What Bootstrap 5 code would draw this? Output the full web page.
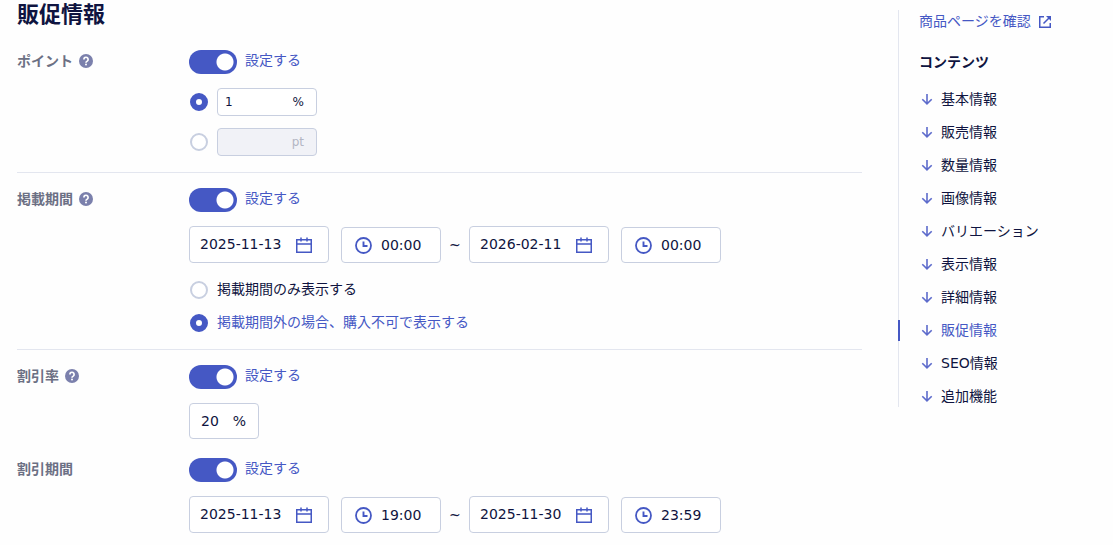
<!DOCTYPE html>
<html lang="ja">
<head>
<meta charset="utf-8">
<meta name="viewport" content="width=device-width, initial-scale=1">
<title>販促情報</title>
<link href="https://cdn.jsdelivr.net/npm/bootstrap@5.3.0/dist/css/bootstrap.min.css" rel="stylesheet">
<style>
:root { --ink: #0f1440; --accent: #4558c4; --line: #e3e6ef; --field: #c8cfe0; --muted: #6c7084; }
body { background: #fefefe; color: var(--ink); font: 14px/21px "DejaVu Sans", "Noto Sans CJK JP", sans-serif; }
a { text-decoration: none; }
.page { gap: 36px; padding-left: 17px; }
.page-title { font-size: 22px; line-height: 30px; margin: 0 0 20px; font-weight: 700; }
.setting { column-gap: 12px; }
.setting + .setting { margin-top: 19px; }
.setting-name { width: 160px; height: 22px; color: var(--muted); font-weight: 700; gap: 6px; }
.setting-body { gap: 14px; min-width: 0; }
.block { padding-bottom: 16px; margin-bottom: 15px; border-bottom: 1px solid var(--line); }
.accent { color: var(--accent); }
.switch-row { height: 24px; }
.switch-row label { height: 22px; }
.form-check-input.toggle { appearance: none; width: 48px; height: 24px; border: 0; border-radius: 12px; background: #c8cee0 radial-gradient(circle at 12px 12px, #fff 8px, transparent 9px); }
.form-check-input.toggle:checked { background: var(--accent) radial-gradient(circle at 36px 12px, #fff 8px, transparent 9px); }
.form-check-input.pick { width: 18px; height: 18px; border: 2px solid var(--field); background: #fff; }
.form-check-input.pick:checked { border: 6px solid var(--accent); background: #fff; }
.pick-list { gap: 12px; }
.pick-text { padding-top: 2px; }
.pick-row { gap: 9px; padding-left: 1px; }
.field { border: 1px solid var(--field); border-radius: 4px; background: #fff; height: 36px; }
.field input { border: 0; outline: 0; padding: 0; background: transparent; color: inherit; flex: 1 1 0; min-width: 0; }
.field button { border: 0; padding: 0; background: transparent; display: flex; }
.field-date { width: 140px; height: 37px; padding: 0 16px 0 10px; }
.field-time { width: 100px; padding: 0 8px 0 13px; gap: 9px; }
.field-small { width: 100px; height: 28px; padding: 0 12px 0 7px; font-size: 12px; }
.field-rate { width: 70px; padding: 0 12px 0 11px; }
.field-off { background: #f1f2f7; color: #b3b6c4; }
.period { gap: 12px; }
.until { width: 12px; margin: 0 -4px; height: 36px; line-height: 36px; }
.side { width: 215px; margin-top: 10px; padding: 1px 0 0 20px; border-left: 1px solid var(--line); }
.side-title { font-size: 14px; line-height: 21px; font-weight: 700; margin: 20px 0 16px; }
.side-list { gap: 12px; }
.side-list a { color: var(--ink); gap: 6px; }
.side-list a.active { color: var(--accent); margin-left: -21px; padding-left: 19px; border-left: 2px solid var(--accent); }
</style>
</head>
<body>
<svg class="d-none">
  <symbol id="help" viewBox="0 0 14 14"><circle cx="7" cy="7" r="7" fill="#7b80ac"/><path d="M4.900 5.400a2.100 2.100 0 1 1 3.300 1.700c-.8.500-1.200.8-1.200 1.600" fill="none" stroke="#fff" stroke-width="1.700"/><circle cx="7" cy="10.600" r="1" fill="#fff"/></symbol>
  <symbol id="calendar" viewBox="0 0 16 16"><path d="M.75 2.750h14.500v12.500H.75zM.75 7h14.500M5 .5v4M11 .5v4" fill="none" stroke="#4558c4" stroke-width="1.500"/></symbol>
  <symbol id="clock" viewBox="0 0 17 17"><circle cx="8.500" cy="8.500" r="7.500" fill="none" stroke="#4558c4" stroke-width="1.800"/><path d="M8.500 4.500v4.500h4" fill="none" stroke="#4558c4" stroke-width="1.900"/></symbol>
  <symbol id="down" viewBox="0 0 16 16"><path d="M8 2v9.500M3.300 7.200 8 11.800l4.700-4.600" fill="none" stroke="#5d6bcb" stroke-width="1.600"/></symbol>
  <symbol id="external" viewBox="0 0 14 14"><path d="M5 1.750H.75v10.500h10.500V8M4.500 8.500l6-6" fill="none" stroke="#4558c4" stroke-width="1.500"/><path d="M7 1h5v5z" fill="#4558c4"/></symbol>
</svg>
<div class="page d-flex align-items-start">
  <main class="flex-grow-1">
    <h1 class="page-title">販促情報</h1>

    <section class="block">
      <div class="setting d-flex">
        <div class="setting-name d-flex align-items-center">ポイント<svg width="14" height="14"><use href="#help"/></svg></div>
        <div class="setting-body d-flex flex-column">
          <div class="switch-row d-flex gap-2"><input class="form-check-input toggle m-0" type="checkbox" role="switch" id="t1" checked><label class="accent" for="t1">設定する</label></div>
          <div class="pick-list d-flex flex-column">
            <div class="pick-row d-flex align-items-center"><input class="form-check-input pick m-0" type="radio" name="point" aria-label="%" checked><div class="field field-small d-flex align-items-center"><input type="text" id="p1" value="1"><label for="p1">%</label></div></div>
            <div class="pick-row d-flex align-items-center"><input class="form-check-input pick m-0" type="radio" name="point" aria-label="pt"><div class="field field-small field-off d-flex align-items-center"><input type="text" id="p2" disabled><label for="p2">pt</label></div></div>
          </div>
        </div>
      </div>
    </section>

    <section class="block">
      <div class="setting d-flex">
        <div class="setting-name d-flex align-items-center">掲載期間<svg width="14" height="14"><use href="#help"/></svg></div>
        <div class="setting-body d-flex flex-column">
          <div class="switch-row d-flex gap-2"><input class="form-check-input toggle m-0" type="checkbox" role="switch" id="t2" checked><label class="accent" for="t2">設定する</label></div>
          <div class="period d-flex align-items-end">
            <div class="field field-date d-flex align-items-center"><input type="text" value="2025-11-13" aria-label="開始日"><button type="button" aria-label="開始日を選択"><svg width="16" height="16"><use href="#calendar"/></svg></button></div>
            <div class="field field-time d-flex align-items-center"><svg width="17" height="17"><use href="#clock"/></svg><input type="text" value="00:00" aria-label="開始時刻"></div>
            <span class="until">~</span>
            <div class="field field-date d-flex align-items-center"><input type="text" value="2026-02-11" aria-label="終了日"><button type="button" aria-label="終了日を選択"><svg width="16" height="16"><use href="#calendar"/></svg></button></div>
            <div class="field field-time d-flex align-items-center"><svg width="17" height="17"><use href="#clock"/></svg><input type="text" value="00:00" aria-label="終了時刻"></div>
          </div>
          <div class="pick-list pick-text d-flex flex-column">
            <div class="pick-row d-flex align-items-center"><input class="form-check-input pick m-0" type="radio" name="show" id="s1"><label for="s1">掲載期間のみ表示する</label></div>
            <div class="pick-row d-flex align-items-center"><input class="form-check-input pick m-0" type="radio" name="show" id="s2" checked><label class="accent" for="s2">掲載期間外の場合、購入不可で表示する</label></div>
          </div>
        </div>
      </div>
    </section>

    <section>
      <div class="setting d-flex">
        <div class="setting-name d-flex align-items-center">割引率<svg width="14" height="14"><use href="#help"/></svg></div>
        <div class="setting-body d-flex flex-column">
          <div class="switch-row d-flex gap-2"><input class="form-check-input toggle m-0" type="checkbox" role="switch" id="t3" checked><label class="accent" for="t3">設定する</label></div>
          <div class="field field-rate d-flex align-items-center"><input type="text" id="rate" value="20"><label for="rate">%</label></div>
        </div>
      </div>
      <div class="setting d-flex">
        <div class="setting-name d-flex align-items-center">割引期間</div>
        <div class="setting-body d-flex flex-column">
          <div class="switch-row d-flex gap-2"><input class="form-check-input toggle m-0" type="checkbox" role="switch" id="t4" checked><label class="accent" for="t4">設定する</label></div>
          <div class="period d-flex align-items-end">
            <div class="field field-date d-flex align-items-center"><input type="text" value="2025-11-13" aria-label="割引開始日"><button type="button" aria-label="割引開始日を選択"><svg width="16" height="16"><use href="#calendar"/></svg></button></div>
            <div class="field field-time d-flex align-items-center"><svg width="17" height="17"><use href="#clock"/></svg><input type="text" value="19:00" aria-label="割引開始時刻"></div>
            <span class="until">~</span>
            <div class="field field-date d-flex align-items-center"><input type="text" value="2025-11-30" aria-label="割引終了日"><button type="button" aria-label="割引終了日を選択"><svg width="16" height="16"><use href="#calendar"/></svg></button></div>
            <div class="field field-time d-flex align-items-center"><svg width="17" height="17"><use href="#clock"/></svg><input type="text" value="23:59" aria-label="割引終了時刻"></div>
          </div>
        </div>
      </div>
    </section>
  </main>

  <aside class="side flex-shrink-0">
    <a class="accent d-flex align-items-center gap-2" href="#">商品ページを確認<svg width="14" height="14"><use href="#external"/></svg></a>
    <h2 class="side-title">コンテンツ</h2>
    <nav class="side-list d-flex flex-column" aria-label="コンテンツ">
      <a class="d-flex align-items-center" href="#"><svg width="16" height="16"><use href="#down"/></svg>基本情報</a>
      <a class="d-flex align-items-center" href="#"><svg width="16" height="16"><use href="#down"/></svg>販売情報</a>
      <a class="d-flex align-items-center" href="#"><svg width="16" height="16"><use href="#down"/></svg>数量情報</a>
      <a class="d-flex align-items-center" href="#"><svg width="16" height="16"><use href="#down"/></svg>画像情報</a>
      <a class="d-flex align-items-center" href="#"><svg width="16" height="16"><use href="#down"/></svg>バリエーション</a>
      <a class="d-flex align-items-center" href="#"><svg width="16" height="16"><use href="#down"/></svg>表示情報</a>
      <a class="d-flex align-items-center" href="#"><svg width="16" height="16"><use href="#down"/></svg>詳細情報</a>
      <a class="active d-flex align-items-center" href="#" aria-current="true"><svg width="16" height="16"><use href="#down"/></svg>販促情報</a>
      <a class="d-flex align-items-center" href="#"><svg width="16" height="16"><use href="#down"/></svg>SEO情報</a>
      <a class="d-flex align-items-center" href="#"><svg width="16" height="16"><use href="#down"/></svg>追加機能</a>
    </nav>
  </aside>
</div>
<script src="https://cdn.jsdelivr.net/npm/bootstrap@5.3.0/dist/js/bootstrap.bundle.min.js"></script>
</body>
</html>
